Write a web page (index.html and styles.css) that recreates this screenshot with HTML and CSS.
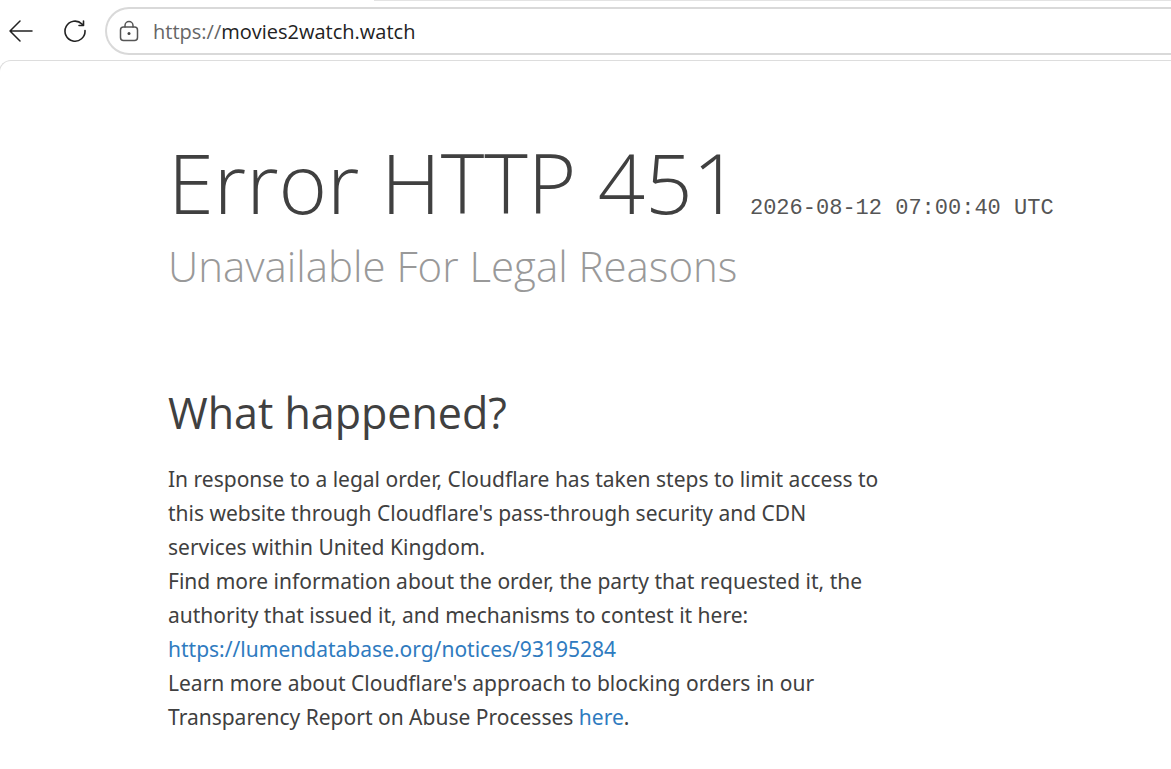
FILE: index.html
```html
<!DOCTYPE html>
<html lang="en">
<head>
  <meta charset="UTF-8">
  <title>Error HTTP 451</title>
  <link rel="stylesheet" href="styles.css">
</head>
<body>
  <div class="tab-edge"></div>
  <header class="toolbar">
    <button class="nav-btn" aria-label="Back">
      <svg width="26" height="22" viewBox="0 0 26 22" stroke-width="1.5"><path d="M24 11H2M12 1L2 11l10 10"/></svg>
    </button>
    <button class="nav-btn" aria-label="Refresh">
      <svg width="24" height="24" viewBox="0 0 24 24" stroke-width="1.6"><path d="M22 11.500A10 10 0 1 1 19 5L20.500 6.300M20.500 2V6.500H16"/></svg>
    </button>
    <div class="address">
      <svg class="lock" width="20" height="22" viewBox="0 0 20 22" stroke-width="1.5"><rect x="1.500" y="7" width="17" height="13.500" rx="3"/><path d="M6 7V5.500a4 4 0 0 1 8 0V7"/><circle class="dot" cx="10" cy="13.500" r="1.500"/></svg>
      <a class="url" href="#"><span class="scheme">https://</span>movies2watch.watch</a>
    </div>
  </header>
  <main class="page">
    <header class="title">
      <h1>Error HTTP 451</h1>
      <span class="time">2026-08-12 07:00:40 UTC</span>
    </header>
    <p class="subtitle">Unavailable For Legal Reasons</p>
    <section class="details">
      <h2>What happened?</h2>
      <p>In response to a legal order, Cloudflare has taken steps to limit access to<br>
        this website through Cloudflare's pass-through security and CDN<br>
        services within United Kingdom.</p>
      <p>Find more information about the order, the party that requested it, the<br>
        authority that issued it, and mechanisms to contest it here:<br>
        <a href="#">https://lumendatabase.org/notices/93195284</a></p>
      <p>Learn more about Cloudflare's approach to blocking orders in our<br>
        Transparency Report on Abuse Processes <a href="#">here</a>.</p>
    </section>
  </main>
</body>
</html>
```

FILE: styles.css
```css
* { margin: 0; padding: 0; box-sizing: border-box; }
body {
  background: #fff;
  color: #404040;
  font-family: "Segoe UI", "Open Sans", sans-serif;
  overflow: hidden;
}
.tab-edge {
  height: 1px;
  margin-left: 374px;
  background: #e3e3e3;
}
.toolbar {
  display: flex;
  align-items: center;
  height: 59px;
  padding: 1px 0 0 8px;
}
.nav-btn {
  display: flex;
  margin-right: 29px;
  border: none;
  background: none;
}
svg {
  fill: none;
  stroke: #222;
  stroke-linecap: round;
  stroke-linejoin: round;
}
.address {
  display: flex;
  flex: 1;
  align-items: center;
  gap: 14px;
  height: 48px;
  margin-left: -11px;
  padding-left: 12px;
  border: 2px solid #d9d9d9;
  border-right: none;
  border-radius: 24px 0 0 24px;
}
.lock { stroke: #555; }
.url {
  color: #222;
  font-size: 20px;
  text-decoration: none;
}
.scheme { color: #666; }
.dot { fill: #444; stroke: none; }
/* left border runs off the window so only the corner shows */
.page {
  margin-left: -1px;
  padding: 69px 168px 40px;
  border-top: 1px solid #ddd;
  border-left: 1px solid #ddd;
  border-radius: 12px 0 0 0;
}
.title {
  display: flex;
  align-items: baseline;
  gap: 10px;
  white-space: nowrap;
}
h1 {
  font-size: 83px;
  font-weight: 300;
  line-height: 104px;
}
.time {
  color: #555;
  font-family: "Liberation Mono", monospace;
  font-size: 22px;
}
.subtitle {
  color: #999;
  font-size: 42px;
  font-weight: 300;
  line-height: 64px;
}
.details { margin-top: 83px; }
h2 {
  margin-bottom: 17px;
  font-size: 43px;
  font-weight: 400;
  line-height: 64px;
}
.details p {
  font-family: "Segoe UI", "Noto Sans", sans-serif;
  font-size: 21px;
  line-height: 34px;
  white-space: nowrap;
}
.details a {
  color: #2f7bbf;
  text-decoration: none;
}
```
